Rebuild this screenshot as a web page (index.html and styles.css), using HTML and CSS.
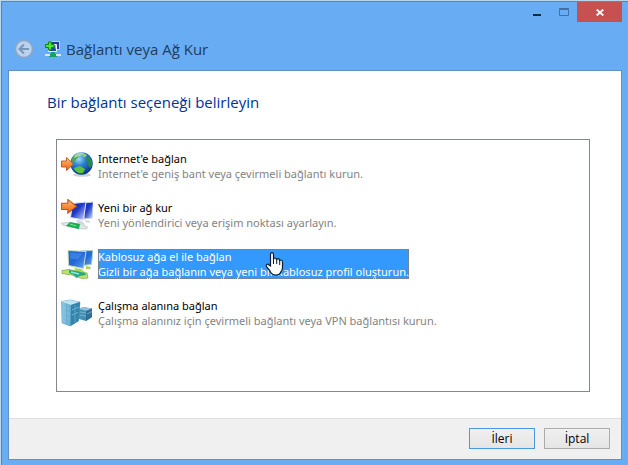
FILE: index.html
```html
<!DOCTYPE html>
<html lang="tr">
<head>
<meta charset="utf-8">
<title>Bağlantı veya Ağ Kur</title>
<link rel="stylesheet" href="styles.css">
</head>
<body>
<svg class="defs" aria-hidden="true">
  <defs>
    <linearGradient id="screen" x1="0" y1="0" x2="1" y2="1"><stop offset="0" stop-color="#0a1bb0"/><stop offset=".45" stop-color="#1f3cc8"/><stop offset="1" stop-color="#dbe6ff"/></linearGradient>
    <linearGradient id="screenLit" x1="0" y1="0" x2="1" y2="1"><stop offset="0" stop-color="#1c62dc"/><stop offset=".5" stop-color="#2369d8"/><stop offset="1" stop-color="#62aaf4"/></linearGradient>
    <linearGradient id="orange" x1="0" y1="0" x2="0" y2="1"><stop offset="0" stop-color="#ffc28c"/><stop offset=".5" stop-color="#fb8d3c"/><stop offset="1" stop-color="#e8641a"/></linearGradient>
    <radialGradient id="sea" cx=".38" cy=".3" r=".7"><stop offset="0" stop-color="#a4dcfa"/><stop offset=".4" stop-color="#2f86d6"/><stop offset="1" stop-color="#0a3790"/></radialGradient>
    <linearGradient id="server" x1="0" y1="0" x2="1" y2="0"><stop offset="0" stop-color="#8cc9e4"/><stop offset="1" stop-color="#3f8fba"/></linearGradient>
    <path id="arrow" d="M.5 4h5V.5l7 6.500-7 6.500V10h-5z" fill="url(#orange)" stroke="#b75420" stroke-width=".9"/>
  </defs>
</svg>
<main class="window">
  <header class="titlebar">
    <div class="caption">
      <button class="cap minimize" type="button" aria-label="Simge durumuna küçült"><svg width="8" height="2"><path d="M0 0h8v2H0z" fill="#142a42"/></svg></button>
      <button class="cap maximize" type="button" aria-label="Ekranı kapla" disabled><svg width="10" height="8"><path d="M.5 1.500h9v6h-9zM0 .5h10" fill="none" stroke="#456f9f"/></svg></button>
      <button class="cap close" type="button" aria-label="Kapat"><svg width="8" height="7"><path d="M.7.5l6.600 6M7.300.5L.7 6.500" stroke="#fff" stroke-width="1.800"/></svg></button>
    </div>
    <div class="heading">
      <button class="back" type="button" aria-label="Geri" disabled><svg width="20" height="20"><circle cx="10" cy="10" r="8.500" fill="#b9d2ee" stroke="#90a7c0" stroke-width="1.500"/><path d="M15 10H6M10 5.500L5.500 10l4.500 4.500" fill="none" stroke="#7a96b6" stroke-width="2"/></svg></button>
      <svg class="app-icon" width="16" height="16"><path d="M6.500.5h8v8h-8z" fill="#1f3e9c" stroke="#c5d2e4"/><path d="M3.500 3.500h8v7h-8z" fill="#224ab4" stroke="#eef3f8"/><path d="M9 4h2v5z" fill="#8db9ff"/><path d="M6 11h4v2h2v3H4v-3h2z" fill="#16a064"/><path d="M0 13h5v2H0zM11 13h5v2h-5z" fill="#dae6ed"/><path d="M3.500 1h3v2.500H9v3H6.500V9h-3V6.500H.5v-3h3z" fill="#4be832" stroke="#11810f"/></svg>
      <h1>Bağlantı veya Ağ Kur</h1>
    </div>
  </header>
  <form class="client">
    <section class="page">
      <h2 id="prompt">Bir bağlantı seçeneği belirleyin</h2>
      <div class="options" role="radiogroup" aria-labelledby="prompt">
        <label class="option">
          <input type="radio" name="connection">
          <svg width="32" height="32"><ellipse cx="21" cy="25" rx="9" ry="1.800" fill="#ccd3da"/><circle cx="20.500" cy="13.500" r="11.200" fill="url(#sea)"/><path d="M11 9c1-3 3-5 6-6l3 1-2 3-3 2-2 3-3 1z" fill="#4fa548"/><path d="M20 4l4-.5 2 2-3 2z" fill="#8ccf6c"/><path d="M13 18l6-2 5 3-2 4c-4 1-8-1-9-5z" fill="#5cc23c"/><path d="M27 6c3 2 4.500 5 4.500 8l-2 4-2-2-1-4-2-2z" fill="#2c8853"/><path d="M14 5c2-2 5-3 9-2l-4 3-6 2z" fill="#e2f7f2" opacity=".6"/><use href="#arrow" y="7"/></svg>
          <span class="text"><b>Internet'e bağlan</b><small>Internet'e geniş bant veya çevirmeli bağlantı kurun.</small></span>
        </label>
        <label class="option">
          <input type="radio" name="connection">
          <svg width="32" height="32"><path d="M22 4l10.500-1-1.500 16-8 1z" fill="url(#screen)" stroke="#c4cedc"/><path d="M11.500 4.500L25 3l-2.500 18-13-2.500z" fill="url(#screen)" stroke="#dde4ee"/><path d="M15 21l5 .5 5 4.500-8-1zM24 21l5 1v1.500h-4z" fill="#cfd8e2"/><path d="M.5 24l7-.5 10 1.500 9 3-1 2-9-.5-15-3.500z" fill="#e5e9ea" stroke="#a9b4b8" stroke-width=".6"/><path d="M9 23l10 2-1 5-5-1-8-2 2-2z" fill="#1caf4f"/><path d="M9 25l6 2" stroke="#82e29b"/><use href="#arrow" transform="scale(1.250 1.050)"/></svg>
          <span class="text"><b>Yeni bir ağ kur</b><small>Yeni yönlendirici veya erişim noktası ayarlayın.</small></span>
        </label>
        <label class="option">
          <input type="radio" name="connection" checked>
          <svg width="32" height="32"><path d="M19 3l13-.5-1.500 14-9.500 1z" fill="url(#screenLit)" stroke="#b8cdc0"/><path d="M7 2.500l18 1-2.500 17-15-3z" fill="url(#screenLit)" stroke="#c8dab8"/><path d="M9 4.500l13 1-5 6-8-1z" fill="#6ba8f2" opacity=".35"/><path d="M13 20l7 1 4 3-9-1zM25 18l5 1-1 2h-4z" fill="#a9d35c"/><path d="M1 22.500l7-1 9 2 9 1.500 1 5-6 .5-10-3.500-10-1.500z" fill="#c3e26a" stroke="#6ea93a" stroke-width=".7"/><path d="M8 22l7 1 9 2 1 2-6 1-4 2-2-3-5-2z" fill="#27a884"/><path d="M10 24l8 2" stroke="#8bebd0" stroke-width="1.500"/></svg>
          <span class="text"><b>Kablosuz ağa el ile bağlan</b><small>Gizli bir ağa bağlanın veya yeni bir kablosuz profil oluşturun.</small></span>
        </label>
        <label class="option">
          <input type="radio" name="connection">
          <svg width="32" height="32"><path d="M18 12l4-2 9 1.500V20l-6 4-7-2z" fill="#458fb4"/><path d="M18 12l4-2 9 1.500-5 2.500z" fill="#93c3da"/><path d="M25 14l6-2.500V20l-6 4z" fill="#2f6f94"/><path d="M.5 4.500L9 3l10 2-1.500 19L9 29 1 26z" fill="url(#server)" stroke="#5d9dbb" stroke-width=".6"/><path d="M.5 4.500L9 3l10 2-9 3z" fill="#c1e2ef"/><path d="M10 8l9-3-1.500 19L9.500 29z" fill="#3384ac"/><path d="M1.500 10l7.500 2M1.500 15l7.500 2M1.500 20l7.500 2M19 15l6 1M19 18l6 1M11 13l7-3M11 18l6-2.500M26 17l5-2.500" fill="none" stroke="#8cc6df" stroke-width=".7"/><path d="M5.500 7v20M14 8v18" stroke="#64a9ca" stroke-width=".8"/></svg>
          <span class="text"><b>Çalışma alanına bağlan</b><small>Çalışma alanınız için çevirmeli bağlantı veya VPN bağlantısı kurun.</small></span>
        </label>
        <svg class="pointer" width="19" height="24" aria-hidden="true"><path d="M5.500 14V2.500q0-1.800 1.500-1.800t1.500 1.800v5q.3-1.500 1.600-1.500t1.500 2q.3-1.300 1.600-1.300T14.700 9q.2-1 1.400-1t1.400 2v6q0 2-1.700 4-.8 3-5 3-3.500 0-5-2.500-1-2-4-5.500-1.200-1.800 0-2.500t2.200.5z" fill="#fff" stroke="#0b1c30" stroke-width="1.200"/><path d="M8.500 7v5M11.700 8v4M14.700 9v4" stroke="#0b1c30"/></svg>
      </div>
    </section>
    <footer class="actions">
      <button class="action primary" type="button">İleri</button>
      <button class="action" type="button">İptal</button>
    </footer>
  </form>
</main>
</body>
</html>
```
FILE: styles.css
```css
* {
  box-sizing: border-box;
}

body {
  margin: 0;
  min-height: 100vh;
  padding: 1px 0 0 1px;
  display: flex;
  background: #b9d5ea;
  font-family: "Open Sans", "Noto Sans", sans-serif;
  font-size: 12px;
  line-height: 15px;
  color: #000;
}

.defs {
  position: absolute;
  width: 0;
  height: 0;
}

button {
  font: inherit;
  color: inherit;
  padding: 0;
}

svg {
  display: block;
  flex: none;
}

.window {
  flex: 1;
  display: flex;
  flex-direction: column;
  padding: 0 6px 5px;
  background: #68acf3;
  border: solid #5488b8;
  border-width: 1px 0 0 1px;
}

.titlebar {
  height: 68px;
}

.caption {
  display: flex;
  justify-content: flex-end;
  height: 20px;
}

.cap {
  width: 27px;
  border: 0;
  background: none;
  display: flex;
  align-items: center;
  justify-content: center;
}

.minimize {
  padding-top: 6px;
}

.close {
  width: 45px;
  background: #c75050;
}

.heading {
  display: flex;
  align-items: center;
  height: 54px;
  padding-left: 6px;
}

.back {
  border: 0;
  background: none;
}

.app-icon {
  margin: 0 5px 0 11px;
}

h1 {
  margin: 0;
  font-size: 15px;
  line-height: 20px;
  font-weight: 400;
  color: #213d5c;
}

.client {
  flex: 1;
  display: flex;
  flex-direction: column;
  background: #fff;
  border: 1px solid #5f91c4;
}

.page {
  flex: 1;
  display: flex;
  flex-direction: column;
  padding: 20px 31px 26px 38px;
}

h2 {
  margin: 0;
  font-size: 15px;
  line-height: 22px;
  font-weight: 400;
  color: #003399;
}

.options {
  position: relative;
  flex: 1;
  display: flex;
  flex-direction: column;
  gap: 17px;
  margin: 26px 0 0 9px;
  padding: 10px 4px;
  border: 1px solid #828790;
}

.option {
  display: flex;
  align-items: center;
  gap: 5px;
}

.option input {
  position: absolute;
  opacity: 0;
  margin: 0;
}

.text {
  display: flex;
  flex-direction: column;
  font-family: "Noto Sans", "Open Sans", sans-serif;
  white-space: nowrap;
}

.text b,
.text small {
  font-size: 11px;
  font-weight: 400;
}

.text small {
  color: #838383;
}

.option input:checked ~ .text {
  background: #3399ff;
  outline: 1px dotted #6f7f90;
  outline-offset: -1px;
}

.option input:checked ~ .text > * {
  color: #fff;
}

.pointer {
  position: absolute;
  left: 208px;
  top: 112px;
}

.actions {
  display: flex;
  justify-content: flex-end;
  gap: 9px;
  padding: 9px 11px 10px;
  background: #f0f0f0;
  border-top: 1px solid #dfdfdf;
}

.action {
  width: 66px;
  height: 21px;
  border: 1px solid #acacac;
  background: linear-gradient(#f0f0f0, #e5e5e5);
}

.primary {
  border-color: #4a98e4;
}
```
